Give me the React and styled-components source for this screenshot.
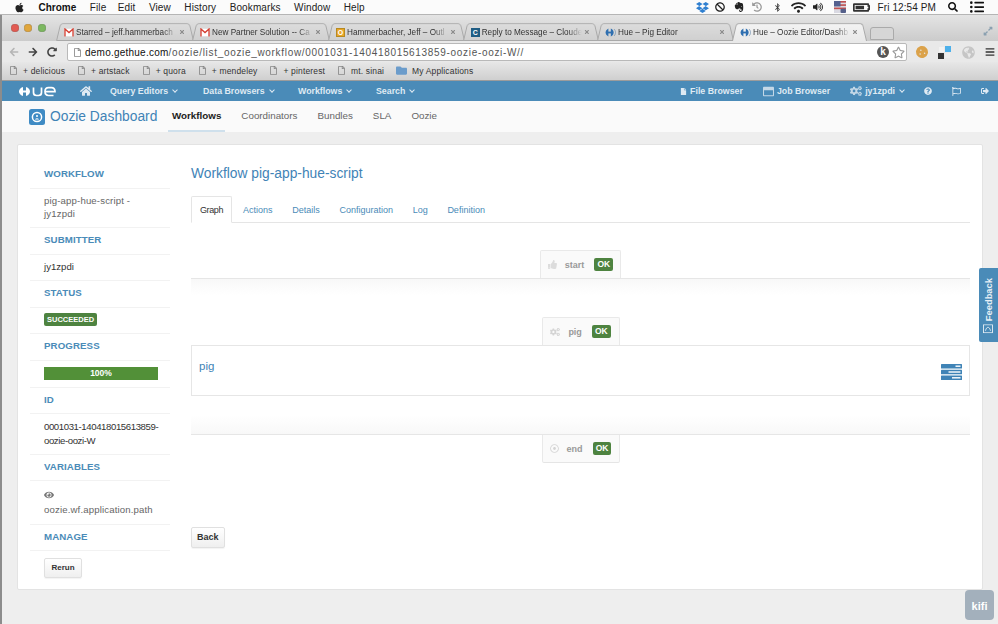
import React from 'react';
import styled, { createGlobalStyle } from 'styled-components';
import {
  FaApple, FaHome, FaFile, FaCogs, FaQuestionCircle, FaRegFlag, FaSignOutAlt, FaThumbsUp,
  FaRegDotCircle, FaEye, FaDropbox, FaWifi, FaBluetoothB, FaVolumeUp, FaSearch, FaHistory,
  FaRegStar, FaRegFile, FaFolder, FaArrowLeft, FaArrowRight, FaRedoAlt, FaCookie, FaGlobeAmericas,
  FaBars, FaExpandAlt, FaListUl, FaRegWindowMaximize, FaTimes, FaBatteryThreeQuarters, FaBan,
} from 'react-icons/fa';
import { SiEvernote } from 'react-icons/si';

const GlobalStyle = createGlobalStyle`
  html, body { margin: 0; padding: 0; background: #eeeeee; }
  body { font-family: "Liberation Sans", Arial, sans-serif; overflow: hidden; }
`;

const tabs = [
  { title: 'Starred – jeff.hammerbach', icon: 'gmail', width: 136 },
  { title: 'New Partner Solution -- Ca', icon: 'gmail', width: 136 },
  { title: 'Hammerbacher, Jeff – Outl', icon: 'outlook', width: 135 },
  { title: 'Reply to Message – Cloude', icon: 'cloud', width: 134 },
  { title: 'Hue – Pig Editor', icon: 'hue', width: 135, plain: true },
  { title: 'Hue – Oozie Editor/Dashb', icon: 'hue', width: 133, active: true },
];

const bookmarks = ['+ delicious', '+ artstack', '+ quora', '+ mendeley', '+ pinterest', 'mt. sinai'];

const TabIcon = ({ kind }) => {
  if (kind === 'gmail') {
    return (
      <svg width="10" height="9" viewBox="0 0 10 9">
        <rect x="0.5" y="0.5" width="9" height="8" fill="#fff" stroke="#d8d8d8" strokeWidth="0.5" />
        <path d="M1 8.5V1l4 3.6L9 1v7.5" fill="none" stroke="#d53c2f" strokeWidth="1.3" />
      </svg>
    );
  }
  if (kind === 'outlook') {
    return <OutlookIcon>O</OutlookIcon>;
  }
  if (kind === 'cloud') {
    return <CloudIcon>C</CloudIcon>;
  }
  return <HueFavicon />;
};

const HueFavicon = () => (
  <svg width="11" height="9" viewBox="0 0 11 9">
    <path d="M3.4 0.5C1.4 1.6 0.6 3 0.6 4.5s0.8 2.9 2.8 4z" fill="#2f6fb0" />
    <rect x="3" y="3.6" width="5" height="1.8" fill="#2f6fb0" />
    <path d="M5.8 0.5C7.8 1.4 8.6 3 8.6 4.5S7.8 7.6 5.8 8.5z" fill="#2f6fb0" />
    <path d="M9 1c1 1 1.5 2.2 1.5 3.5S10 7 9 8" fill="none" stroke="#6b8cad" strokeWidth="0.7" />
  </svg>
);

const HueLogo = () => (
  <svg width="39" height="11" viewBox="0 0 39 11">
    <path d="M5 1C2.2 2 1 3.6 1 5.5S2.2 9 5 10z" fill="#fff" />
    <rect x="4" y="4.5" width="5" height="2" fill="#fff" />
    <path d="M8 1c2.8 1 4 2.6 4 4.5S10.8 9 8 10z" fill="#fff" />
    <path d="M15.5 1.5v5c0 2 1 3 3 3h2c2 0 3-1 3-3v-5" fill="none" stroke="#fff" strokeWidth="1.7" />
    <path d="M27 5.6h10c0-2.7-1.4-4-3.5-4h-3c-2.2 0-3.5 1.5-3.5 4s1.3 3.9 3.5 3.9h5" fill="none" stroke="#fff" strokeWidth="1.7" />
  </svg>
);

const OozieIcon = () => (
  <svg width="16" height="16" viewBox="0 0 16 16">
    <rect width="16" height="16" rx="2.5" fill="#3f8bc4" />
    <circle cx="8" cy="8" r="4.6" fill="none" stroke="#fff" strokeWidth="1.5" />
    <path d="M5.8 10.4a3 3 0 0 1 4.4 0z" fill="#fff" />
    <circle cx="8" cy="7" r="1" fill="#fff" />
  </svg>
);

const JobsIcon = () => (
  <svg width="21" height="16" viewBox="0 0 21 16">
    <rect y="0" width="21" height="4.4" rx="0.5" fill="#3f83b6" />
    <rect x="14.5" y="1.5" width="5" height="1.4" fill="#fff" />
    <rect y="5.8" width="21" height="4.4" rx="0.5" fill="#3f83b6" />
    <rect x="7.5" y="7.3" width="12" height="1.4" fill="#fff" />
    <rect y="11.6" width="21" height="4.4" rx="0.5" fill="#3f83b6" />
    <rect x="11" y="13.1" width="8.5" height="1.4" fill="#fff" />
  </svg>
);

const FlagIcon = () => (
  <svg width="12" height="12" viewBox="0 0 11 11">
    <rect width="11" height="11" fill="#d9d9e2" />
    <rect y="0" width="11" height="1.5" fill="#c05050" />
    <rect y="3" width="11" height="1.5" fill="#c05050" />
    <rect y="6" width="11" height="1.5" fill="#c05050" />
    <rect width="6" height="5" fill="#54608f" />
    <rect x="6" y="7" width="5" height="4" rx="1" fill="#55608a" />
  </svg>
);

const DeltaIcon = () => (
  <svg width="13" height="13" viewBox="0 0 13 13">
    <rect x="7" width="6" height="6" fill="#4db0ea" />
    <rect y="7" width="6" height="6" fill="#333" />
    <rect y="1" x="1" width="5" height="5" fill="#f2f2f2" />
    <rect x="7" y="7" width="5" height="5" fill="#eee" />
  </svg>
);

const FeedbackIcon = () => (
  <svg width="10" height="9" viewBox="0 0 10 9">
    <rect x="0.5" y="0.5" width="9" height="8" fill="none" stroke="#e8f0f6" strokeWidth="0.9" />
    <path d="M2.5 2.5c0.5 2.4 1.5 3.4 2.5 3.4s2-1 2.5-3.4" fill="none" stroke="#e8f0f6" strokeWidth="0.9" />
  </svg>
);

const App = () => {
  return (
    <>
      <GlobalStyle />
      <Page>
        <MenuBar>
          <MenuLeft>
            <FaApple size={11} color="#222" />
            <AppName>Chrome</AppName>
            <MenuItem $narrow>File</MenuItem>
            {['Edit', 'View', 'History', 'Bookmarks', 'Window', 'Help'].map((item) => (
              <MenuItem key={item}>{item}</MenuItem>
            ))}
          </MenuLeft>
          <MenuRight>
            <StatusSlot $gap={0}><FaDropbox size={13} color="#2f7fd0" /></StatusSlot>
            <StatusSlot $gap={6}><FaBan size={10} color="#222" /></StatusSlot>
            <StatusSlot $gap={9}><SiEvernote size={10} color="#222" /></StatusSlot>
            <StatusSlot $gap={8}><FaHistory size={10} color="#999" /></StatusSlot>
            <StatusSlot $gap={11}><FaBluetoothB size={9} color="#333" /></StatusSlot>
            <StatusSlot $gap={9}><FaWifi size={15} color="#222" /></StatusSlot>
            <StatusSlot $gap={7}><FaVolumeUp size={10} color="#222" /></StatusSlot>
            <StatusSlot $gap={11}><FlagIcon /></StatusSlot>
            <StatusSlot $gap={7}><FaBatteryThreeQuarters size={17} color="#333" /></StatusSlot>
            <Clock>Fri 12:54 PM</Clock>
            <StatusSlot $gap={12}><FaSearch size={10} color="#111" /></StatusSlot>
            <StatusSlot $gap={12}><FaListUl size={14} color="#111" /></StatusSlot>
          </MenuRight>
        </MenuBar>

        <TabStrip>
          <Lights>
            <Light $color="#e25b52" />
            <Light $color="#e0a63c" />
            <Light $color="#7cb860" />
          </Lights>
          {tabs.map((tab) => (
            <BrowserTab key={tab.title} $width={tab.width} $active={tab.active}>
              <TabIcon kind={tab.icon} />
              <TabTitle $plain={tab.plain}>{tab.title}</TabTitle>
              <FaTimes size={6} color="#888" />
            </BrowserTab>
          ))}
          <NewTab />
          <Expand><FaExpandAlt size={10} color="#8aa0b0" /></Expand>
        </TabStrip>

        <Toolbar>
          <FaArrowLeft size={10} color="#b5b5b5" />
          <FaArrowRight size={10} color="#444" />
          <FaRedoAlt size={10} color="#444" />
          <UrlField>
            <FaRegFile size={9} color="#888" />
            <UrlText><strong>demo.gethue.com</strong>/oozie/list_oozie_workflow/0001031-140418015613859-oozie-oozi-W//</UrlText>
            <KBadge>k</KBadge>
            <FaRegStar size={13} color="#999" />
          </UrlField>
          <ExtIcons>
            <FaCookie size={12} color="#dba24a" />
            <DeltaIcon />
            <FaGlobeAmericas size={13} color="#c6c6c6" />
            <FaBars size={10} color="#333" />
          </ExtIcons>
        </Toolbar>

        <Bookmarks>
          {bookmarks.map((b) => (
            <Bookmark key={b}>
              <FaRegFile size={9} color="#888" />
              {b}
            </Bookmark>
          ))}
          <Bookmark>
            <FaFolder size={11} color="#6b9ccb" />
            My Applications
          </Bookmark>
        </Bookmarks>

        <TopNav>
          <NavGroup>
            <LogoSlot><HueLogo /></LogoSlot>
            <HomeSlot><FaHome size={12} /></HomeSlot>
            <NavLink $w={93}>Query Editors <Caret /></NavLink>
            <NavLink $w={95}>Data Browsers <Caret /></NavLink>
            <NavLink $w={78}>Workflows <Caret /></NavLink>
            <NavLink>Search <Caret /></NavLink>
          </NavGroup>
          <NavRight>
            <NavLink><FaFile size={7} /> File Browser</NavLink>
            <NavLink><FaRegWindowMaximize size={11} color="#c4d8e7" /> Job Browser</NavLink>
            <NavLink><FaCogs size={12} color="#c4d8e7" /> jy1zpdi <Caret /></NavLink>
            <NavIcon><FaQuestionCircle size={8} /></NavIcon>
            <NavIcon><FaRegFlag size={9} /></NavIcon>
            <NavIcon><FaSignOutAlt size={8} /></NavIcon>
          </NavRight>
        </TopNav>

        <SubNav>
          <Brand><OozieIcon />Oozie Dashboard</Brand>
          <SubItem $active>Workflows</SubItem>
          <SubItem>Coordinators</SubItem>
          <SubItem>Bundles</SubItem>
          <SubItem>SLA</SubItem>
          <SubItem>Oozie</SubItem>
        </SubNav>

        <Content>
          <Card>
            <Sidebar>
              <SideHead>WORKFLOW</SideHead>
              <SideValue $muted>pig-app-hue-script -<br />jy1zpdi</SideValue>
              <SideHead>SUBMITTER</SideHead>
              <SideValue>jy1zpdi</SideValue>
              <SideHead>STATUS</SideHead>
              <SideValue><StatusBadge>SUCCEEDED</StatusBadge></SideValue>
              <SideHead>PROGRESS</SideHead>
              <ProgressRow><ProgressBar>100%</ProgressBar></ProgressRow>
              <SideHead>ID</SideHead>
              <SideValue $tight $roomy>0001031-140418015613859-oozie-oozi-W</SideValue>
              <SideHead>VARIABLES</SideHead>
              <SideValue $muted $roomy>
                <EyeLine><FaEye size={10} color="#777" /></EyeLine>
                oozie.wf.application.path
              </SideValue>
              <SideHead>MANAGE</SideHead>
              <ManageRow><Button $small>Rerun</Button></ManageRow>
            </Sidebar>

            <Main>
              <Title>Workflow pig-app-hue-script</Title>
              <PageTabs>
                <PageTab $active>Graph</PageTab>
                <PageTab>Actions</PageTab>
                <PageTab>Details</PageTab>
                <PageTab>Configuration</PageTab>
                <PageTab>Log</PageTab>
                <PageTab>Definition</PageTab>
              </PageTabs>

              <Graph>
                <NodeTab $width={81}>
                  <FaThumbsUp size={9} color="#dcdcdc" />
                  <NodeName>start</NodeName>
                  <OkBadge>OK</OkBadge>
                </NodeTab>
                <FadeDown />
                <NodeTab $width={78} $top={22}>
                  <FaCogs size={10} color="#d4d4d4" />
                  <NodeName>pig</NodeName>
                  <OkBadge>OK</OkBadge>
                </NodeTab>
                <ActionBox>
                  <ActionLink>pig</ActionLink>
                  <JobsSlot><JobsIcon /></JobsSlot>
                </ActionBox>
                <FadeUp />
                <NodeTab $width={78} $flip>
                  <FaRegDotCircle size={9} color="#d4d4d4" />
                  <NodeName>end</NodeName>
                  <OkBadge>OK</OkBadge>
                </NodeTab>
              </Graph>

              <BackRow><Button>Back</Button></BackRow>
            </Main>
          </Card>
        </Content>

        <WindowEdge />
        <Feedback>
          <FeedbackLabel><FeedbackIcon /> Feedback</FeedbackLabel>
        </Feedback>
        <Kifi>kifi</Kifi>
      </Page>
    </>
  );
};

const Page = styled.div`
  position: relative;
  width: 998px;
  height: 624px;
  overflow: hidden;
  background: #eeeeee;
  display: flex;
  flex-direction: column;
`;

const WindowEdge = styled.div`
  position: absolute;
  left: 0;
  top: 15px;
  bottom: 0;
  width: 2px;
  background: #8c8c8c;
`;

const MenuBar = styled.div`
  height: 15px;
  flex: none;
  background: #fbfbfb;
  border-bottom: 1px solid #b5b5b5;
  box-sizing: border-box;
  display: flex;
  justify-content: space-between;
  align-items: center;
  padding: 0 14px 0 14px;
  color: #222;
  font-size: 10px;
`;

const MenuLeft = styled.div`
  display: flex;
  align-items: center;
  gap: 13.5px;
`;

const AppName = styled.span`
  font-weight: bold;
  font-size: 10px;
  color: #111;
`;

const MenuItem = styled.span`
  letter-spacing: 0.1px;
  ${(p) => p.$narrow && 'margin-right: -2px;'}
`;

const MenuRight = styled.div`
  display: flex;
  align-items: center;
`;

const StatusSlot = styled.span`
  display: flex;
  align-items: center;
  margin-left: ${(p) => p.$gap}px;
`;

const Clock = styled.span`
  font-size: 10px;
  letter-spacing: 0.1px;
  margin-left: 8px;
`;

const TabStrip = styled.div`
  height: 26px;
  flex: none;
  box-sizing: border-box;
  padding: 7px 0 0 57px;
  display: flex;
  align-items: stretch;
  background: linear-gradient(#e4e4e4, #cbcbcb);
  position: relative;
`;

const Lights = styled.div`
  position: absolute;
  left: 10.5px;
  top: 9px;
  display: flex;
  gap: 5.5px;
`;

const Light = styled.span`
  width: 8px;
  height: 8px;
  border-radius: 50%;
  background: ${(p) => p.$color};
  box-shadow: inset 0 0 1px #555;
`;

const BrowserTab = styled.div`
  width: ${(p) => p.$width}px;
  flex: none;
  box-sizing: border-box;
  padding: 1px 8px 0 7px;
  display: flex;
  align-items: center;
  gap: 2px;
  font-size: 8.2px;
  color: #333;
  position: relative;
  z-index: ${(p) => (p.$active ? 1 : 0)};

  &::before {
    content: '';
    position: absolute;
    inset: 0 -1px;
    z-index: -1;
    transform: perspective(30px) rotateX(6deg);
    transform-origin: bottom;
    border: 1px solid #a9a9a9;
    border-bottom: ${(p) => (p.$active ? 'none' : '1px solid #a9a9a9')};
    border-radius: 3px 3px 0 0;
    background: ${(p) => (p.$active ? 'linear-gradient(#f2f2f2, #e9e9e9)' : 'linear-gradient(#dcdcdc, #d0d0d0)')};
  }
`;

const TabTitle = styled.span`
  flex: 1;
  white-space: nowrap;
  ${(p) => !p.$plain && 'mask-image: linear-gradient(to right, #000 86%, transparent 100%);'}
`;

const OutlookIcon = styled.span`
  width: 9px;
  height: 9px;
  background: #e9a628;
  border: 1px solid #b78a20;
  box-sizing: border-box;
  font-size: 7px;
  line-height: 7px;
  font-weight: bold;
  text-align: center;
  color: #fff;
`;

const CloudIcon = styled(OutlookIcon)`
  background: #1f5d84;
  border-color: #1f5d84;
`;

const NewTab = styled.div`
  width: 22px;
  height: 11px;
  margin: 5px 0 0 4px;
  border: 1px solid #aaa;
  border-radius: 3px 3px 0 0;
  background: #d6d6d6;
`;

const Expand = styled.div`
  position: absolute;
  right: 5px;
  top: 7px;
`;

const Toolbar = styled.div`
  height: 21px;
  flex: none;
  box-sizing: border-box;
  padding: 2px 0 1px 9px;
  display: flex;
  align-items: center;
  gap: 9px;
  background: #e9e9e9;
`;

const UrlField = styled.div`
  flex: 1;
  margin-left: 1px;
  height: 18px;
  box-sizing: border-box;
  background: #fff;
  border: 1px solid #b9b9b9;
  border-radius: 2px;
  display: flex;
  align-items: center;
  gap: 3px;
  padding: 0 1px 0 5px;
  font-size: 10px;
  color: #555;
`;

const UrlText = styled.span`
  flex: 1;
  white-space: nowrap;
  letter-spacing: 0.68px;

  strong {
    font-weight: normal;
    color: #111;
    letter-spacing: 0.23px;
  }
`;

const KBadge = styled.span`
  width: 12px;
  height: 12px;
  border-radius: 50%;
  background: #555;
  color: #fff;
  font-weight: bold;
  font-size: 10px;
  line-height: 12px;
  text-align: center;
`;

const ExtIcons = styled.div`
  width: 82px;
  padding-right: 3px;
  box-sizing: border-box;
  flex: none;
  display: flex;
  align-items: center;
  justify-content: space-between;
`;

const Bookmarks = styled.div`
  height: 19px;
  flex: none;
  box-sizing: border-box;
  padding: 0 0 1px 9px;
  display: flex;
  align-items: center;
  gap: 12px;
  font-size: 8.5px;
  color: #333;
  letter-spacing: 0.15px;
  background: linear-gradient(#e7e7e7, #cfcfcf);
  border-bottom: 1px solid #9c9c9c;
`;

const Bookmark = styled.span`
  display: flex;
  align-items: center;
  gap: 5px;
`;

const TopNav = styled.div`
  height: 20px;
  flex: none;
  box-sizing: border-box;
  background: #4a8bb8;
  display: flex;
  justify-content: space-between;
  align-items: center;
  padding: 0 9px 0 18px;
  color: #dfeaf3;
  font-size: 8.8px;
  font-weight: bold;
`;

const NavGroup = styled.div`
  display: flex;
  align-items: center;
`;

const NavRight = styled.div`
  display: flex;
  align-items: center;
  gap: 20px;
`;

const LogoSlot = styled.span`
  width: 62px;
  display: flex;
`;

const HomeSlot = styled.span`
  width: 30px;
  display: flex;
`;

const NavLink = styled.span`
  ${(p) => p.$w && `width: ${p.$w}px;`}
  display: inline-flex;
  align-items: center;
  gap: 3px;
  white-space: nowrap;
`;

const Caret = styled.span`
  width: 3px;
  height: 3px;
  margin: -2px 0 0 2px;
  border-right: 1px solid #dfeaf3;
  border-bottom: 1px solid #dfeaf3;
  transform: rotate(45deg);
`;

const NavIcon = styled.span`
  display: flex;
  color: #dfeaf3;
`;

const SubNav = styled.div`
  height: 31px;
  flex: none;
  box-sizing: border-box;
  padding-left: 29px;
  background: #fafafa;
  display: flex;
  align-items: center;
`;

const Brand = styled.div`
  display: flex;
  align-items: center;
  gap: 5px;
  width: 139px;
  font-size: 13.8px;
  color: #3f83b6;
  white-space: nowrap;
`;

const SubItem = styled.span`
  align-self: stretch;
  box-sizing: border-box;
  display: flex;
  align-items: center;
  padding: 0 4px;
  margin-right: 12px;
  font-size: 9.8px;
  color: ${(p) => (p.$active ? '#222' : '#666')};
  font-weight: ${(p) => (p.$active ? 'bold' : 'normal')};
  border-bottom: 2px solid ${(p) => (p.$active ? '#cfe0ec' : 'transparent')};
`;

const Content = styled.div`
  flex: 1;
  padding: 12px 15px 34px 17px;
  min-height: 0;
  display: flex;
`;

const Card = styled.div`
  flex: 1;
  box-sizing: border-box;
  background: #fff;
  border: 1px solid #e3e3e3;
  border-radius: 2px;
  padding: 17px 12px 0 12px;
  display: flex;
  gap: 21px;
`;

const Sidebar = styled.div`
  width: 140px;
  flex: none;
  display: flex;
  flex-direction: column;
`;

const SideHead = styled.div`
  height: 26.5px;
  box-sizing: border-box;
  padding: 6px 0 0 14px;
  border-bottom: 1px solid #f2f2f2;
  font-size: 9.7px;
  font-weight: bold;
  color: #4a8bb8;
  letter-spacing: 0.1px;
`;

const SideValue = styled.div`
  box-sizing: border-box;
  padding: ${(p) => (p.$roomy ? '6px 0 7px 14px' : '5px 0 7px 14px')};
  border-bottom: 1px solid #f2f2f2;
  font-size: 9.6px;
  line-height: 13.4px;
  letter-spacing: ${(p) => (p.$tight ? '-0.4px' : p.$muted ? '0.15px' : '0')};
  color: ${(p) => (p.$muted ? '#666' : '#333')};
`;

const EyeLine = styled.div`
  display: flex;
  height: 16px;
  align-items: center;
`;

const StatusBadge = styled.span`
  display: inline-block;
  height: 13px;
  box-sizing: border-box;
  padding: 0 3px;
  border-radius: 2px;
  background: #4e8340;
  color: #fff;
  font-size: 7.5px;
  line-height: 13px;
  font-weight: bold;
  vertical-align: top;
`;

const ProgressRow = styled.div`
  box-sizing: border-box;
  height: 27px;
  padding: 6px 12px 7px 14px;
  border-bottom: 1px solid #f2f2f2;
`;

const ProgressBar = styled.div`
  height: 13px;
  background: #529038;
  color: #fff;
  font-size: 8.5px;
  line-height: 13px;
  font-weight: bold;
  text-align: center;
`;

const ManageRow = styled.div`
  padding: 5px 0 0 14px;
`;

const Button = styled.button`
  font-family: inherit;
  font-weight: bold;
  color: #333;
  height: ${(p) => (p.$small ? '20px' : '21px')};
  padding: 0 ${(p) => (p.$small ? '6.5px' : '5px')};
  font-size: ${(p) => (p.$small ? '8px' : '9px')};
  background: linear-gradient(#ffffff, #efefef);
  border: 1px solid #e0e0e0;
  border-radius: 2px;
  box-shadow: 0 1px 1px rgba(0, 0, 0, 0.05);
`;

const Main = styled.div`
  flex: 1;
  min-width: 0;
`;

const Title = styled.div`
  font-size: 13.8px;
  line-height: 18px;
  padding-top: 3px;
  color: #3f83b6;
`;

const PageTabs = styled.div`
  display: flex;
  height: 26px;
  margin-top: 13px;
  border-bottom: 1px solid #e5e5e5;
`;

const PageTab = styled.div`
  box-sizing: border-box;
  height: 27px;
  display: flex;
  align-items: center;
  padding: 0 8px;
  margin-right: ${(p) => (p.$active ? '2px' : '1.7px')};
  font-size: 9px;
  letter-spacing: ${(p) => (p.$active ? '-0.4px' : '0')};
  color: ${(p) => (p.$active ? '#333' : '#4a8bb8')};
  border: 1px solid ${(p) => (p.$active ? '#e5e5e5' : 'transparent')};
  border-bottom-color: ${(p) => (p.$active ? '#fff' : 'transparent')};
  border-radius: 2px 2px 0 0;
`;

const Graph = styled.div`
  margin-top: 27px;
  display: flex;
  flex-direction: column;
  align-items: center;
`;

const NodeTab = styled.div`
  width: ${(p) => p.$width}px;
  height: 28px;
  margin-top: ${(p) => p.$top || 0}px;
  box-sizing: border-box;
  background: #fafafa;
  border: 1px solid #e9e9e9;
  border-bottom: ${(p) => (p.$flip ? '1px solid #e5e5e5' : 'none')};
  border-top: ${(p) => (p.$flip ? 'none' : '1px solid #e9e9e9')};
  border-radius: ${(p) => (p.$flip ? '0 0 2px 2px' : '2px 2px 0 0')};
  display: flex;
  align-items: center;
  justify-content: center;
  gap: 8px;
`;

const NodeName = styled.span`
  font-size: 9px;
  font-weight: bold;
  color: #999;
  margin-right: 2px;
`;

const OkBadge = styled.span`
  height: 13px;
  padding: 0 3px;
  border-radius: 2px;
  background: #4e8340;
  color: #fff;
  font-size: 8.5px;
  line-height: 13px;
  font-weight: bold;
`;

const FadeDown = styled.div`
  align-self: stretch;
  box-sizing: border-box;
  height: 17px;
  border-top: 1px solid #e6e6e6;
  background: linear-gradient(#f8f8f8, #ffffff);
`;

const FadeUp = styled.div`
  align-self: stretch;
  box-sizing: border-box;
  height: 20px;
  margin-top: 19px;
  border-bottom: 1px solid #e6e6e6;
  background: linear-gradient(#ffffff, #f8f8f8);
`;

const ActionBox = styled.div`
  align-self: stretch;
  height: 51px;
  box-sizing: border-box;
  border: 1px solid #e6e6e6;
  padding: 14px 7px 0 7px;
  display: flex;
  justify-content: space-between;
  align-items: flex-start;
`;

const ActionLink = styled.span`
  font-size: 11.5px;
  color: #3f83b6;
`;

const JobsSlot = styled.span`
  display: flex;
  margin-top: 4px;
`;

const BackRow = styled.div`
  margin-top: 63px;
`;

const Feedback = styled.div`
  position: absolute;
  right: 0;
  top: 268px;
  width: 19px;
  height: 74px;
  background: #4a8bb8;
  border-radius: 2px 0 0 2px;
  display: flex;
  align-items: flex-end;
  justify-content: center;
  padding-bottom: 9px;
  box-sizing: border-box;
`;

const FeedbackLabel = styled.span`
  writing-mode: vertical-rl;
  transform: rotate(180deg);
  display: flex;
  align-items: center;
  gap: 3px;
  color: #e8f0f6;
  font-size: 9.4px;
  font-weight: bold;
  white-space: nowrap;
`;

const Kifi = styled.div`
  position: absolute;
  left: 965px;
  top: 590px;
  width: 29px;
  height: 30px;
  border-radius: 4px;
  background: #a3b0bc;
  color: #fff;
  font-size: 11px;
  font-weight: bold;
  line-height: 33px;
  text-align: center;
`;

export default App;
